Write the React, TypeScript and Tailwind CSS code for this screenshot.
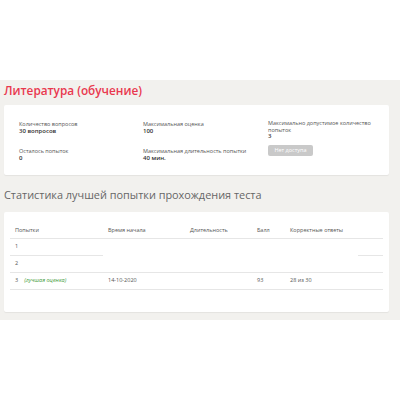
export default function App() {
  const rows = [
    { n: "1", best: false, start: "", dur: "", score: "", correct: "", partial: true },
    { n: "2", best: false, start: "", dur: "", score: "", correct: "", partial: false },
    { n: "3", best: true, start: "14-10-2020", dur: "", score: "93", correct: "28 из 30", partial: false },
  ];

  return (
    <div className="w-[400px] h-[400px] bg-white font-['Open_Sans',sans-serif]">
      <div className="h-[80px]" />
      {/* основной блок */}
      <div className="bg-[#f2f1ee] h-[240px] px-[4px] pt-[1px]">
        <h1 className="text-[11.8px] leading-[18px] font-semibold text-[#e9384f]">
          Литература (обучение)
        </h1>

        <div className="mt-[6px] bg-white rounded-[2px] shadow-[0_1px_1px_rgba(0,0,0,0.06)] w-[385px] h-[70px] pl-[15px] pt-[16px] grid grid-cols-[124px_125px_115px] grid-rows-[27px_auto] text-[#555] leading-[6.5px]">
          <div>
            <div className="text-[5.5px]">Количество вопросов</div>
            <div className="text-[6px] font-semibold text-[#333]">30 вопросов</div>
          </div>
          <div>
            <div className="text-[5.5px]">Максимальная оценка</div>
            <div className="text-[6px] font-semibold text-[#333]">100</div>
          </div>
          <div className="-mt-[1px]">
            <div className="text-[5.5px] w-[108px]">Максимально допустимое количество попыток</div>
            <div className="text-[6px] font-semibold text-[#333]">3</div>
          </div>
          <div>
            <div className="text-[5.5px]">Осталось попыток</div>
            <div className="text-[6px] font-semibold text-[#333]">0</div>
          </div>
          <div>
            <div className="text-[5.5px]">Максимальная длительность попытки</div>
            <div className="text-[6px] font-semibold text-[#333]">40 мин.</div>
          </div>
          <div className="-mt-[5px]">
            <button className="w-[45px] h-[11px] rounded-[2px] bg-[#c9c9c9] text-white text-[5.5px] leading-[11px]">
              Нет доступа
            </button>
          </div>
        </div>

        <h2 className="mt-[12px] text-[10.9px] leading-[16px] text-[#666]">
          Статистика лучшей попытки прохождения теста
        </h2>

        <div className="mt-[9px] bg-white rounded-[2px] shadow-[0_1px_1px_rgba(0,0,0,0.06)] w-[385px] h-[100px] pl-[6px] pt-[14px]">
          <table className="table-fixed border-collapse w-[373px] text-[5.5px] text-[#555]">
            <colgroup>
              <col className="w-[93px]" />
              <col className="w-[82px]" />
              <col className="w-[67px]" />
              <col className="w-[33px]" />
              <col className="w-[73px]" />
              <col className="w-[25px]" />
            </colgroup>
            <thead>
              <tr className="border-b border-[#e6e6e6] h-[12px]">
                <th className="text-left font-medium pl-[5px] align-top">Попытки</th>
                <th className="text-left font-medium pl-[5px] align-top">Время начала</th>
                <th className="text-left font-medium pl-[5px] align-top">Длительность</th>
                <th className="text-left font-medium pl-[5px] align-top">Балл</th>
                <th className="text-left font-medium pl-[5px] align-top">Корректные ответы</th>
                <th />
              </tr>
            </thead>
            <tbody>
              {rows.map((r) => (
                <tr key={r.n} className={`h-[17px] ${r.partial ? "" : "border-b border-[#e6e6e6]"}`}>
                  <td className={`pl-[5px] ${r.partial ? "border-b border-[#e6e6e6]" : ""}`}>
                    {r.n}
                    {r.best && <span className="ml-[6px] italic text-[#3f9b3a]">(лучшая оценка)</span>}
                  </td>
                  <td className="pl-[5px]">{r.start}</td>
                  <td className="pl-[5px]">{r.dur}</td>
                  <td className="pl-[5px]">{r.score}</td>
                  <td className="pl-[5px]">{r.correct}</td>
                  <td className={r.partial ? "border-b border-[#e6e6e6]" : ""} />
                </tr>
              ))}
            </tbody>
          </table>
        </div>
      </div>
    </div>
  );
}
